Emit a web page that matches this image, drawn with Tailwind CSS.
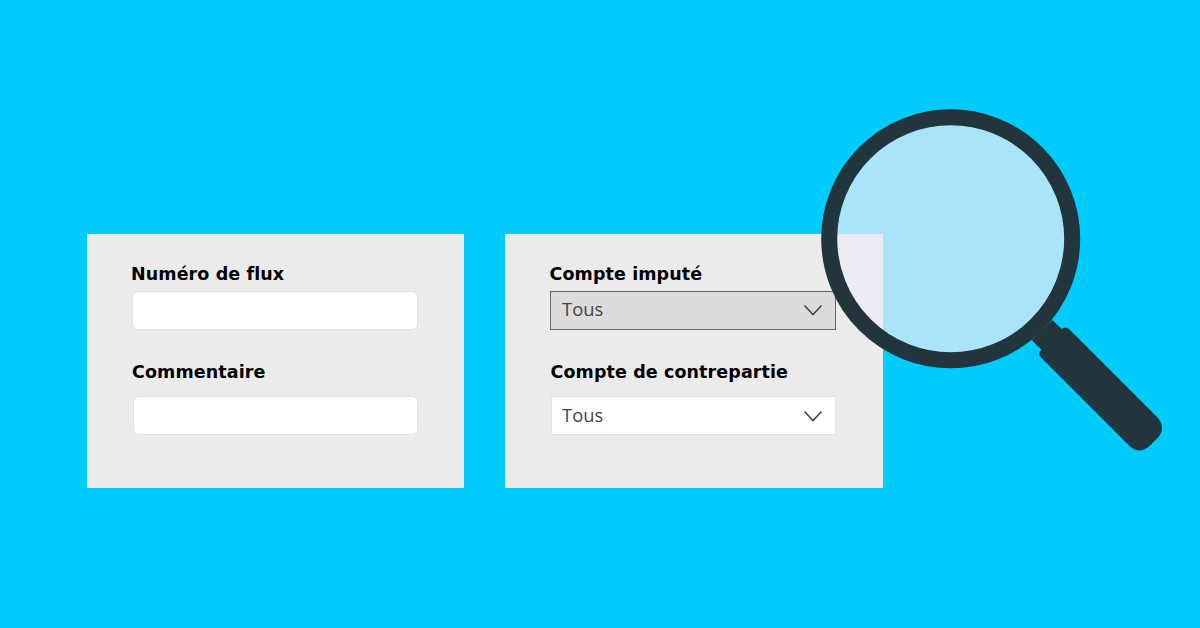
<!DOCTYPE html>
<html lang="fr">
<head>
<meta charset="utf-8">
<title>Recherche</title>
<script src="https://cdn.jsdelivr.net/npm/@tailwindcss/browser@4"></script>
</head>
<body class="m-0">
<main class="relative w-[1200px] h-[628px] overflow-hidden bg-[#00ccfb] font-['DejaVu_Sans',sans-serif]">
  <div class="flex gap-[41px] pl-[87px] pt-[234px]">
    <section class="w-[377px] h-[254px] bg-[#ebebeb] pt-[30px]">
      <label class="block ml-[44px] h-[20px] leading-[20px] text-[17.5px] tracking-[0.1px] font-bold text-black">Numéro de flux</label>
      <div class="ml-[44.5px] mt-[7px] w-[286px] h-[38.5px] rounded-[6px] border border-[#e0e0e0] bg-white"></div>
      <label class="block ml-[45px] mt-[32.5px] h-[20px] leading-[20px] text-[17.5px] tracking-[0.1px] font-bold text-black">Commentaire</label>
      <div class="ml-[45.5px] mt-[14px] w-[285px] h-[39px] rounded-[6px] border border-[#e0e0e0] bg-white"></div>
    </section>
    <section class="w-[378px] h-[254px] bg-[#ebebeb] pt-[30px]">
      <label class="block ml-[44.5px] h-[20px] leading-[20px] text-[17.5px] tracking-[0.1px] font-bold text-black">Compte imputé</label>
      <div class="ml-[45px] mt-[7px] w-[286px] h-[38.5px] border border-[#666666] bg-[#dcdcdc] flex items-center justify-between pl-[11px] pr-[12px]">
        <span class="mb-[3px] font-['Open_Sans',sans-serif] text-[18.4px] text-[#444444]">Tous</span>
        <svg width="20" height="12" viewBox="0 0 20 12" fill="none" stroke="#444444" stroke-width="1.6"><path d="M1.5 1.5 L10 10.5 L18.5 1.5"/></svg>
      </div>
      <label class="block ml-[45.5px] mt-[32.5px] h-[20px] leading-[20px] text-[17.5px] tracking-[0.1px] font-bold text-black">Compte de contrepartie</label>
      <div class="ml-[46px] mt-[14px] w-[285px] h-[39px] border border-[#e3e3e3] bg-white flex items-center justify-between pl-[10px] pr-[12px]">
        <span class="mb-[1px] font-['Open_Sans',sans-serif] text-[18.4px] text-[#444444]">Tous</span>
        <svg width="20" height="12" viewBox="0 0 20 12" fill="none" stroke="#444444" stroke-width="1.6"><path d="M1.5 1.5 L10 10.5 L18.5 1.5"/></svg>
      </div>
    </section>
  </div>
  <svg class="absolute left-0 top-0" width="1200" height="628" viewBox="0 0 1200 628">
    <defs><clipPath id="glass"><circle cx="950.7" cy="238.8" r="114"/></clipPath></defs>
    <circle cx="950.7" cy="238.8" r="114" fill="#a9e4f8"/>
    <rect x="820" y="234" width="63" height="254" fill="#edecf4" clip-path="url(#glass)"/>
    <circle cx="950.7" cy="238.8" r="121.5" fill="none" stroke="#22343c" stroke-width="16"/>
    <path fill="#22343c" d="M1052.3 320 L1061.7 329 L1063 328 Q1066.5 326.5 1069 329 L1157.5 417.5 Q1166 427 1158.5 437 L1150 445.5 Q1140 455 1130 446.5 L1041 357.5 Q1038 354 1040 351.5 L1041.5 350 L1031.7 340 Z"/>
  </svg>
</main>
</body>
</html>
